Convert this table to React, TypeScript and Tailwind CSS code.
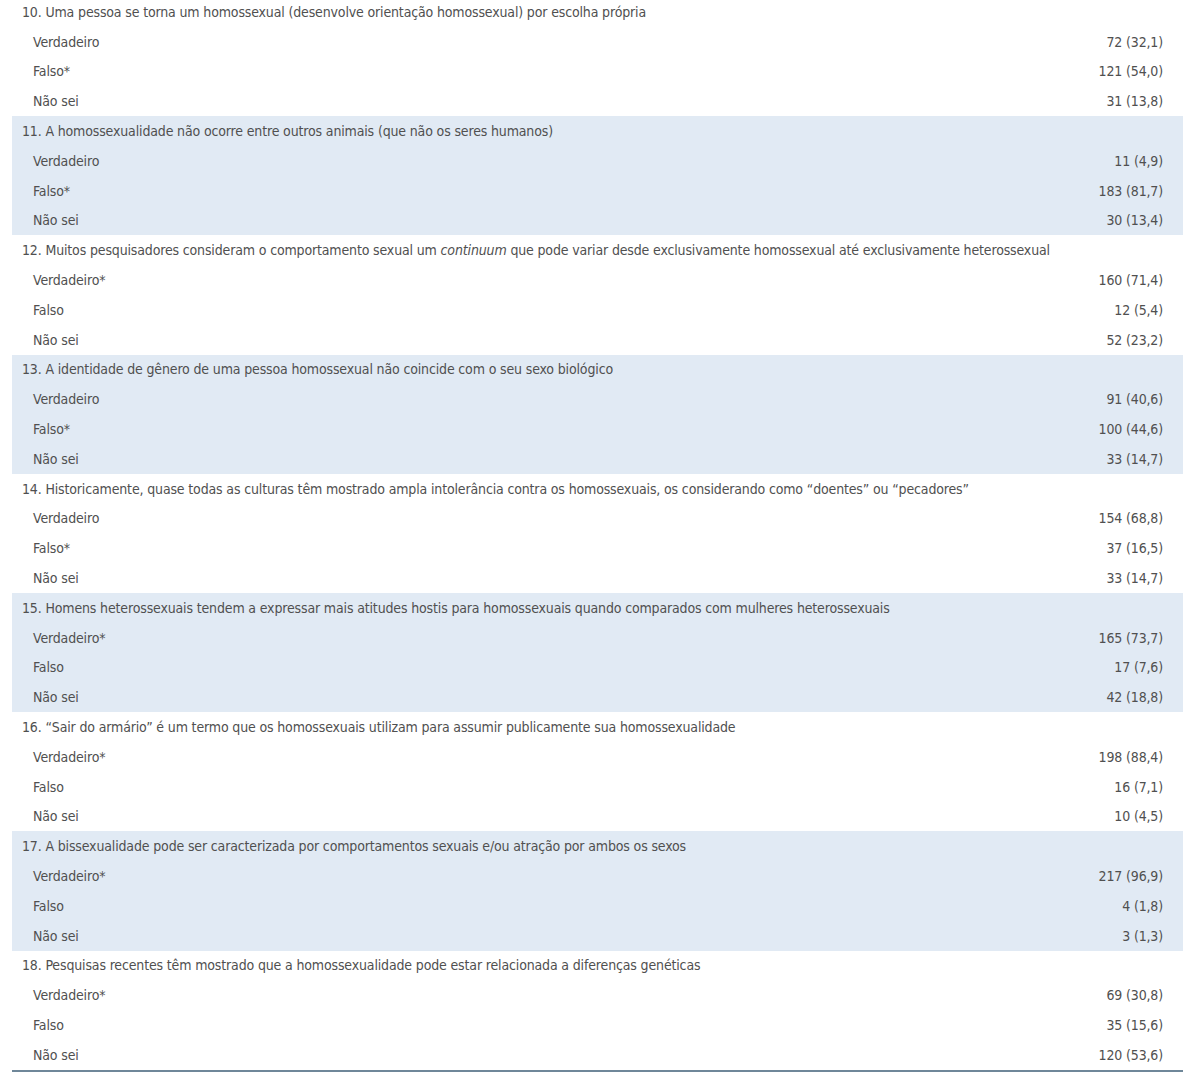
type Answer = { label: string; value: string };
type Item = { question: React.ReactNode; answers: Answer[] };

const items: Item[] = [
  {
    question: "10. Uma pessoa se torna um homossexual (desenvolve orientação homossexual) por escolha própria",
    answers: [
      { label: "Verdadeiro", value: "72 (32,1)" },
      { label: "Falso*", value: "121 (54,0)" },
      { label: "Não sei", value: "31 (13,8)" },
    ],
  },
  {
    question: "11. A homossexualidade não ocorre entre outros animais (que não os seres humanos)",
    answers: [
      { label: "Verdadeiro", value: "11 (4,9)" },
      { label: "Falso*", value: "183 (81,7)" },
      { label: "Não sei", value: "30 (13,4)" },
    ],
  },
  {
    question: (
      <>
        12. Muitos pesquisadores consideram o comportamento sexual um <i>continuum</i>{" "}
        que pode variar desde exclusivamente homossexual até exclusivamente heterossexual
      </>
    ),
    answers: [
      { label: "Verdadeiro*", value: "160 (71,4)" },
      { label: "Falso", value: "12 (5,4)" },
      { label: "Não sei", value: "52 (23,2)" },
    ],
  },
  {
    question: "13. A identidade de gênero de uma pessoa homossexual não coincide com o seu sexo biológico",
    answers: [
      { label: "Verdadeiro", value: "91 (40,6)" },
      { label: "Falso*", value: "100 (44,6)" },
      { label: "Não sei", value: "33 (14,7)" },
    ],
  },
  {
    question:
      "14. Historicamente, quase todas as culturas têm mostrado ampla intolerância contra os homossexuais, os considerando como “doentes” ou “pecadores”",
    answers: [
      { label: "Verdadeiro", value: "154 (68,8)" },
      { label: "Falso*", value: "37 (16,5)" },
      { label: "Não sei", value: "33 (14,7)" },
    ],
  },
  {
    question:
      "15. Homens heterossexuais tendem a expressar mais atitudes hostis para homossexuais quando comparados com mulheres heterossexuais",
    answers: [
      { label: "Verdadeiro*", value: "165 (73,7)" },
      { label: "Falso", value: "17 (7,6)" },
      { label: "Não sei", value: "42 (18,8)" },
    ],
  },
  {
    question:
      "16. “Sair do armário” é um termo que os homossexuais utilizam para assumir publicamente sua homossexualidade",
    answers: [
      { label: "Verdadeiro*", value: "198 (88,4)" },
      { label: "Falso", value: "16 (7,1)" },
      { label: "Não sei", value: "10 (4,5)" },
    ],
  },
  {
    question: "17. A bissexualidade pode ser caracterizada por comportamentos sexuais e/ou atração por ambos os sexos",
    answers: [
      { label: "Verdadeiro*", value: "217 (96,9)" },
      { label: "Falso", value: "4 (1,8)" },
      { label: "Não sei", value: "3 (1,3)" },
    ],
  },
  {
    question: "18. Pesquisas recentes têm mostrado que a homossexualidade pode estar relacionada a diferenças genéticas",
    answers: [
      { label: "Verdadeiro*", value: "69 (30,8)" },
      { label: "Falso", value: "35 (15,6)" },
      { label: "Não sei", value: "120 (53,6)" },
    ],
  },
];

export default function App() {
  return (
    <div
      className="w-[1200px] h-[1085px] overflow-hidden bg-white text-[#505050] text-[14px] tracking-[-0.15px] leading-none"
      style={{ fontFamily: '"Liberation Sans Narrow", "DejaVu Sans Condensed", "Liberation Sans", sans-serif' }}
    >
      <div className="ml-[12px] w-[1171px] mt-[-3px] border-b-2 border-[#6f8799]">
        {items.map((item, i) => (
          <div key={i} className={i % 2 === 1 ? "bg-[#e1eaf4]" : "bg-white"}>
            <div className="h-[29.8px] flex items-center pl-[10px] whitespace-nowrap">
              <span>{item.question}</span>
            </div>
            {item.answers.map((a) => (
              <div key={a.label} className="h-[29.8px] flex items-center justify-between pl-[21px] pr-[20px]">
                <span>{a.label}</span>
                <span>{a.value}</span>
              </div>
            ))}
          </div>
        ))}
      </div>
    </div>
  );
}
